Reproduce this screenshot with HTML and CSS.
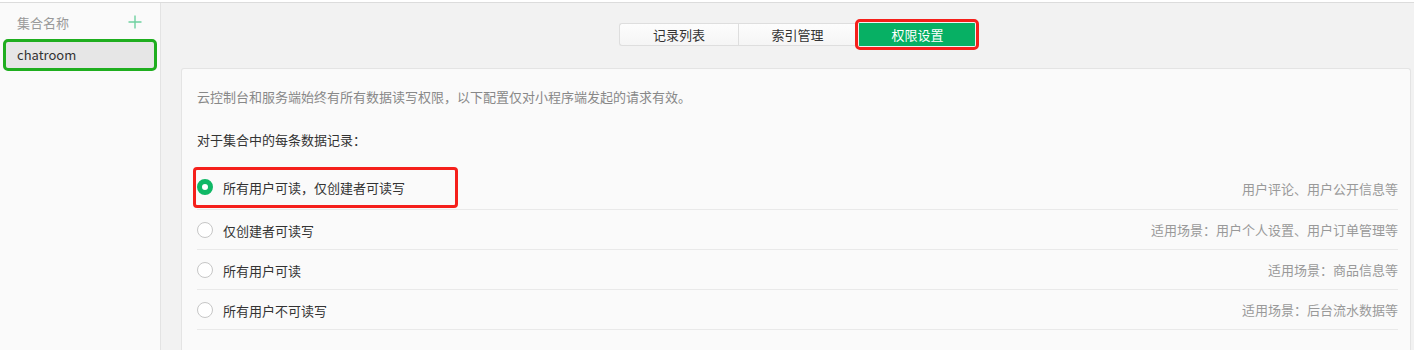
FILE: index.html
```html
<!DOCTYPE html>
<html lang="zh">
<head>
<meta charset="utf-8">
<link rel="stylesheet" href="styles.css">
</head>
<body>
<div class="app">
  <aside class="sidebar">
    <div class="side-head">
      <span class="side-title">集合名称</span>
      <svg class="plus" width="14" height="14" viewBox="0 0 14 14"><path d="M7 0.5V13.5M0.5 7H13.5" stroke="#6fd1a0" stroke-width="1.4" fill="none"/></svg>
    </div>
    <div class="side-item">chatroom</div>
  </aside>
  <main class="main">
    <div class="tabs">
      <div class="tab">记录列表</div>
      <div class="tab">索引管理</div>
      <div class="tab-mark"><div class="tab active">权限设置</div></div>
    </div>
    <section class="card">
      <p class="desc">云控制台和服务端始终有所有数据读写权限，以下配置仅对小程序端发起的请求有效。</p>
      <p class="label">对于集合中的每条数据记录：</p>
      <div class="rows">
        <div class="row">
          <div class="opt-mark">
            <span class="radio on"></span><span class="opt">所有用户可读，仅创建者可读写</span>
          </div>
          <span class="hint">用户评论、用户公开信息等</span>
        </div>
        <div class="row">
          <div class="opt-wrap"><span class="radio"></span><span class="opt">仅创建者可读写</span></div>
          <span class="hint">适用场景：用户个人设置、用户订单管理等</span>
        </div>
        <div class="row">
          <div class="opt-wrap"><span class="radio"></span><span class="opt">所有用户可读</span></div>
          <span class="hint">适用场景：商品信息等</span>
        </div>
        <div class="row">
          <div class="opt-wrap"><span class="radio"></span><span class="opt">所有用户不可读写</span></div>
          <span class="hint">适用场景：后台流水数据等</span>
        </div>
      </div>
    </section>
  </main>
</div>
</body>
</html>
```

FILE: styles.css
```css
html, body {
  margin: 0;
  padding: 0;
  height: 100%;
}
body {
  background: #fff;
  padding-top: 2px;
  box-sizing: border-box;
  font-family: "Microsoft YaHei", "Noto Sans CJK SC", "Liberation Sans", sans-serif;
  font-size: 13px;
  color: #333;
  overflow: hidden;
}
.app {
  display: flex;
  height: 348px;
  border-top: 1px solid #dcdcdc;
}
.sidebar {
  width: 160px;
  flex: none;
  background: #fafafa;
  border-right: 1px solid #e3e3e3;
}
.side-head {
  display: flex;
  align-items: center;
  justify-content: space-between;
  height: 36px;
  padding: 0 18px 0 17px;
}
.side-title {
  color: #999;
  font-size: 13px;
  padding-top: 3px;
}
.plus {
  display: block;
  margin-top: 1px;
}
.side-item {
  margin: 0 3px;
  height: 26px;
  line-height: 26px;
  padding-left: 11px;
  background: #e6e6e6;
  border: 3px solid #1fae1f;
  border-radius: 5px;
  color: #333;
}
.main {
  flex: 1;
  background: #f2f2f2;
  padding: 0 3px 0 20px;
  display: flex;
  flex-direction: column;
}
.tabs {
  display: flex;
  justify-content: center;
  align-items: center;
  margin-top: 16px;
  padding-left: 6px;
}
.tab {
  box-sizing: border-box;
  width: 119px;
  height: 23px;
  line-height: 21px;
  text-align: center;
  background: linear-gradient(#fdfdfd, #f5f5f5);
  border: 1px solid #dedede;
  color: #333;
  font-size: 13px;
}
.tab:first-child {
  border-radius: 3px 0 0 3px;
  border-right: none;
}
.tab-mark {
  border: 3px solid #f5201b;
  border-radius: 5px;
  padding: 1px;
  margin-left: -2px;
}
.tab.active {
  width: 116px;
  height: 23px;
  background: #07b064;
  border-color: #07b064;
  color: #fff;
  border-radius: 1px;
}
.card {
  margin-top: 18px;
  flex: 1;
  background: #fafafa;
  border: 1px solid #e4e4e4;
  border-bottom: none;
  border-radius: 3px 3px 0 0;
  padding: 0 12px 0 15px;
}
.desc {
  margin: 19px 0 0;
  line-height: 18px;
  color: #888;
}
.label {
  margin: 25px 0 0;
  line-height: 18px;
  color: #333;
}
.rows {
  margin-top: 19px;
}
.row {
  display: flex;
  align-items: center;
  justify-content: space-between;
  height: 39px;
  border-bottom: 1px solid #e9e9e9;
}
.row:first-child {
  height: 41px;
}
.opt-wrap, .opt-mark {
  display: flex;
  align-items: center;
}
.opt-wrap {
  padding-top: 1px;
}
.opt-mark {
  border: 3px solid #f5201b;
  border-radius: 4px;
  margin-left: -4px;
  padding: 0 50px 0 1px;
  height: 35px;
  margin-top: -3px;
}
.radio {
  box-sizing: border-box;
  width: 16px;
  height: 16px;
  border-radius: 50%;
  border: 1px solid #c6c6c6;
  background: #fff;
  margin-right: 10px;
  flex: none;
}
.radio.on {
  border: 5px solid #10b866;
  background: #fff;
}
.opt {
  color: #333;
}
.hint {
  color: #999;
}
```
